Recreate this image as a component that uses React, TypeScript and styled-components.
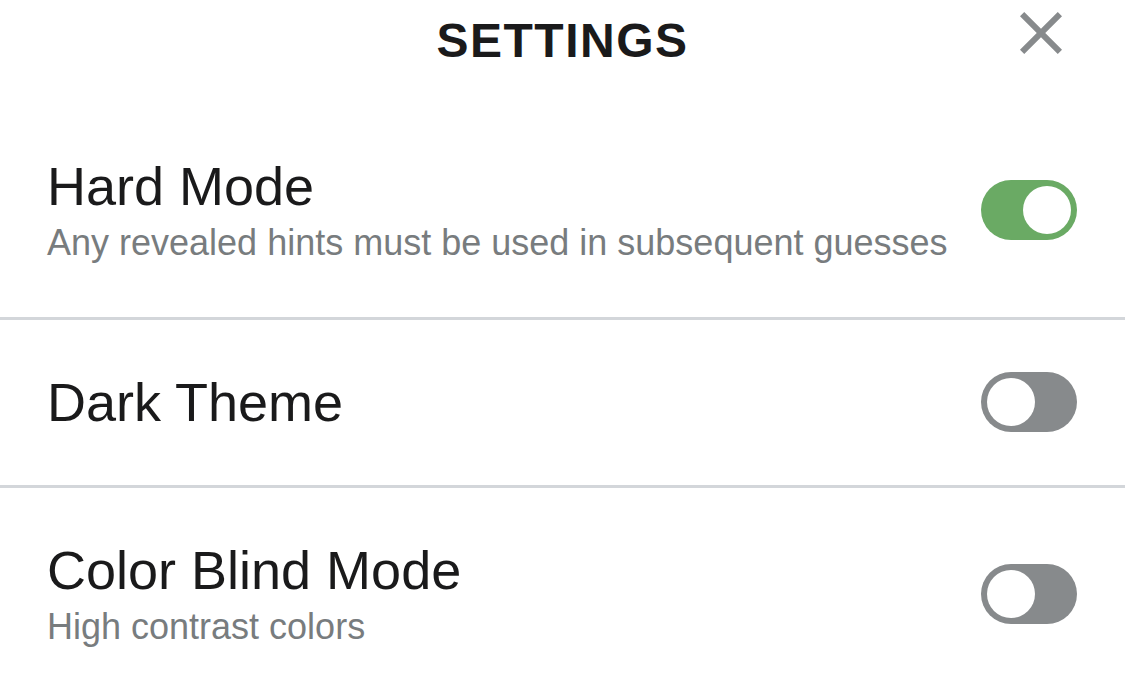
import React from "react";
import styled, { createGlobalStyle } from "styled-components";

const GlobalStyle = createGlobalStyle`
  html, body {
    margin: 0;
    padding: 0;
    background: #ffffff;
    font-family: "Liberation Sans", Helvetica, Arial, sans-serif;
    color: #1a1a1b;
  }
  * { box-sizing: border-box; }
`;

const Page = styled.div`
  width: 100%;
  height: 694px;
  overflow: hidden;
  display: flex;
  flex-direction: column;
  & > * { flex-shrink: 0; }
`;

const Header = styled.header`
  height: 104px;
  display: grid;
  grid-template-columns: 1fr auto 1fr;
  padding: 11px 48px 0 48px;
`;

const Title = styled.h1`
  grid-column: 2;
  margin: 0;
  font-size: 48px;
  line-height: 60px;
  font-weight: 700;
  letter-spacing: 1.5px;
  text-transform: uppercase;
  text-align: center;
  color: #1a1a1b;
`;

const CloseButton = styled.button`
  grid-column: 3;
  justify-self: end;
  align-self: start;
  margin-top: -14px;
  width: 72px;
  height: 72px;
  padding: 0;
  border: none;
  background: none;
  color: #878a8c;
  display: flex;
  cursor: pointer;
`;

const Row = styled.div`
  display: flex;
  justify-content: space-between;
  align-items: center;
  padding: 52px 48px 53px 47px;
  border-bottom: 3px solid #d3d6da;
`;

const TextBlock = styled.div`
  display: flex;
  flex-direction: column;
`;

const Label = styled.div`
  font-size: 54px;
  line-height: 60px;
  color: #1a1a1b;
`;

const Description = styled.div`
  margin-top: 6px;
  font-size: 36px;
  line-height: 42px;
  color: #787c7e;
`;

const Switch = styled.div<{ $on: boolean }>`
  width: 96px;
  height: 60px;
  border-radius: 30px;
  padding: 6px;
  flex-shrink: 0;
  display: flex;
  justify-content: ${(p) => (p.$on ? "flex-end" : "flex-start")};
  background: ${(p) => (p.$on ? "#6aaa64" : "#878a8c")};
`;

const Knob = styled.div`
  width: 48px;
  height: 48px;
  border-radius: 50%;
  background: #ffffff;
`;

const settings = [
  {
    label: "Hard Mode",
    description: "Any revealed hints must be used in subsequent guesses",
    on: true,
  },
  { label: "Dark Theme", description: "", on: false },
  { label: "Color Blind Mode", description: "High contrast colors", on: false },
];

export default function App() {
  return (
    <>
      <GlobalStyle />
      <Page>
        <Header>
          <Title>Settings</Title>
          <CloseButton aria-label="Close">
            <svg width="72" height="72" viewBox="0 0 24 24" fill="currentColor">
              <path d="M19 6.41L17.59 5 12 10.59 6.41 5 5 6.41 10.59 12 5 17.59 6.41 19 12 13.41 17.59 19 19 17.59 13.41 12z" />
            </svg>
          </CloseButton>
        </Header>
        {settings.map((s) => (
          <Row key={s.label}>
            <TextBlock>
              <Label>{s.label}</Label>
              {s.description && <Description>{s.description}</Description>}
            </TextBlock>
            <Switch $on={s.on}>
              <Knob />
            </Switch>
          </Row>
        ))}
      </Page>
    </>
  );
}
